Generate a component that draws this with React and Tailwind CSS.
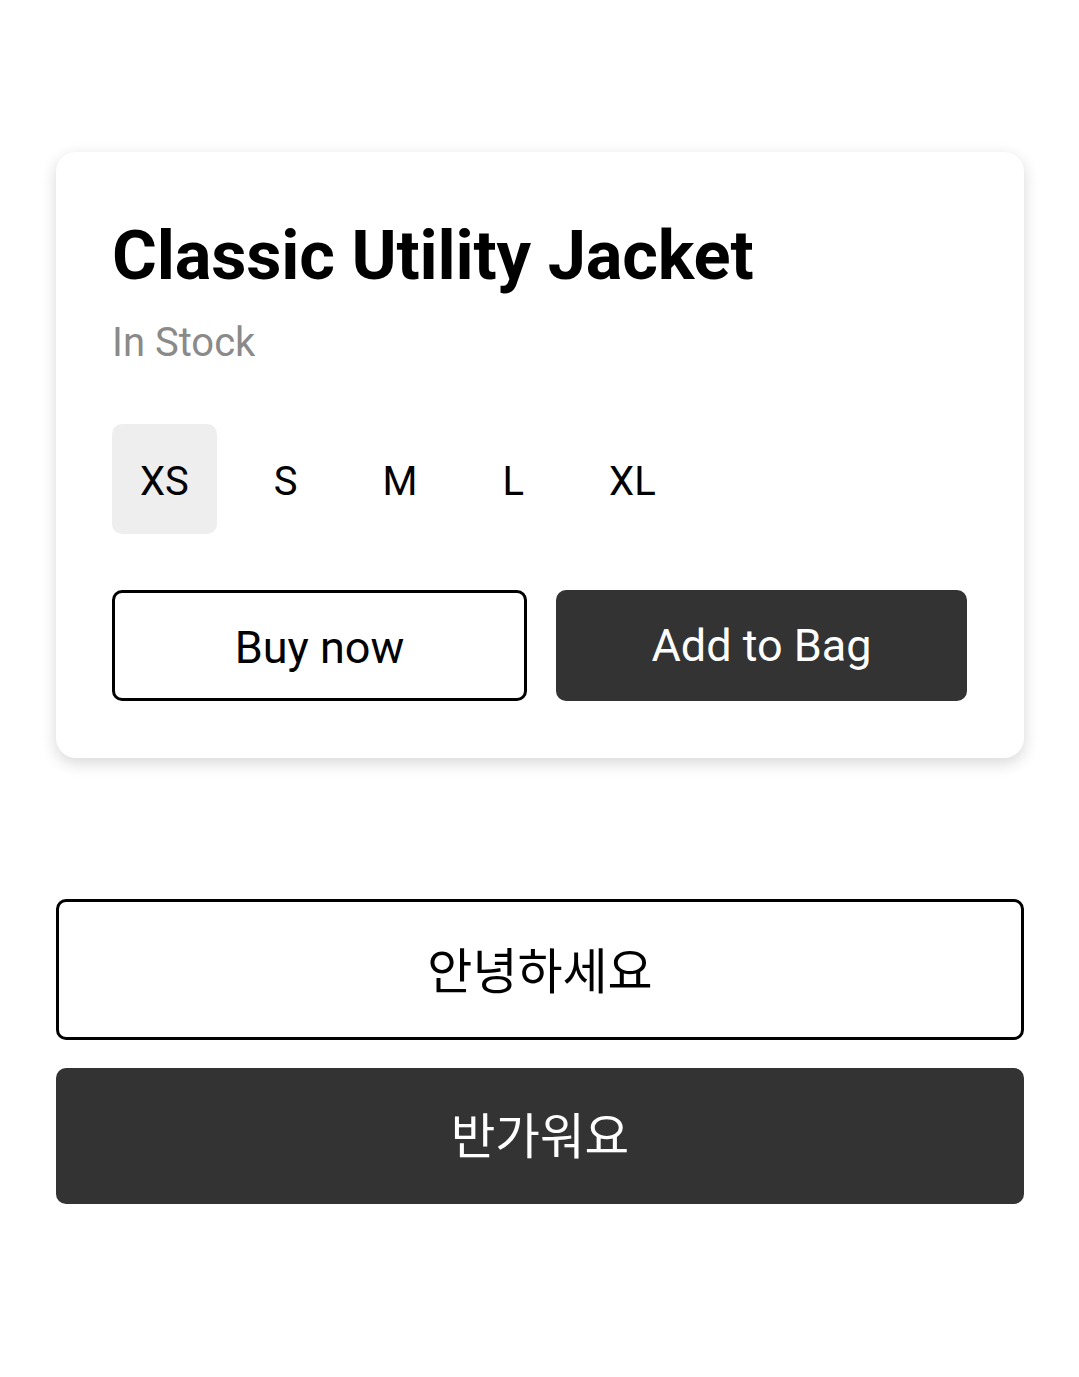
import React from "react";

const sizes = ["XS", "S", "M", "L", "XL"];

export default function App() {
  return (
    <div
      className="min-h-[1377px] bg-white pl-[56px] pr-[55px] pt-[152px] text-black"
      style={{ fontFamily: "Roboto, 'Noto Sans CJK KR', sans-serif" }}
    >
      <div className="rounded-[20px] bg-white pl-[56px] pr-[57px] pt-[56px] pb-[57px] shadow-[0_5px_16px_rgba(0,0,0,0.16)]">
        <h1 className="text-[68.6px] font-bold leading-[96px] tracking-[-0.2px]">
          Classic Utility Jacket
        </h1>
        <p className="mt-[15px] text-[40px] leading-[48px] text-[#8a8a8a]">In Stock</p>
        <div className="mt-[57px] flex gap-[29px]">
          {sizes.map((s, i) => (
            <div
              key={s}
              className={`flex h-[110px] items-center justify-center rounded-[10px] px-[28px] pt-[6px] text-[40px] ${
                i === 0 ? "bg-[#eeeeee]" : ""
              }`}
            >
              {s}
            </div>
          ))}
        </div>
        <div className="mt-[56px] grid grid-cols-[415fr_411fr] gap-[29px]">
          <button className="flex h-[111px] items-center justify-center rounded-[10px] border-[3px] border-black bg-white pt-[4px] text-[45px]">
            Buy now
          </button>
          <button className="flex h-[111px] items-center justify-center rounded-[10px] bg-[#333333] text-[45px] text-white">
            Add to Bag
          </button>
        </div>
      </div>
      <div className="mt-[141px] flex flex-col gap-[28px]">
        <button
          className="flex h-[141px] w-full items-center justify-center rounded-[10px] border-[3px] border-black bg-white pb-[4px] text-[49px]"
          style={{ fontFamily: "'Noto Sans CJK KR', sans-serif" }}
        >
          안녕하세요
        </button>
        <button
          className="flex h-[136px] w-full items-center justify-center rounded-[10px] bg-[#333333] pb-[5px] text-[48.5px] text-white"
          style={{ fontFamily: "'Noto Sans CJK KR', sans-serif" }}
        >
          반가워요
        </button>
      </div>
    </div>
  );
}
